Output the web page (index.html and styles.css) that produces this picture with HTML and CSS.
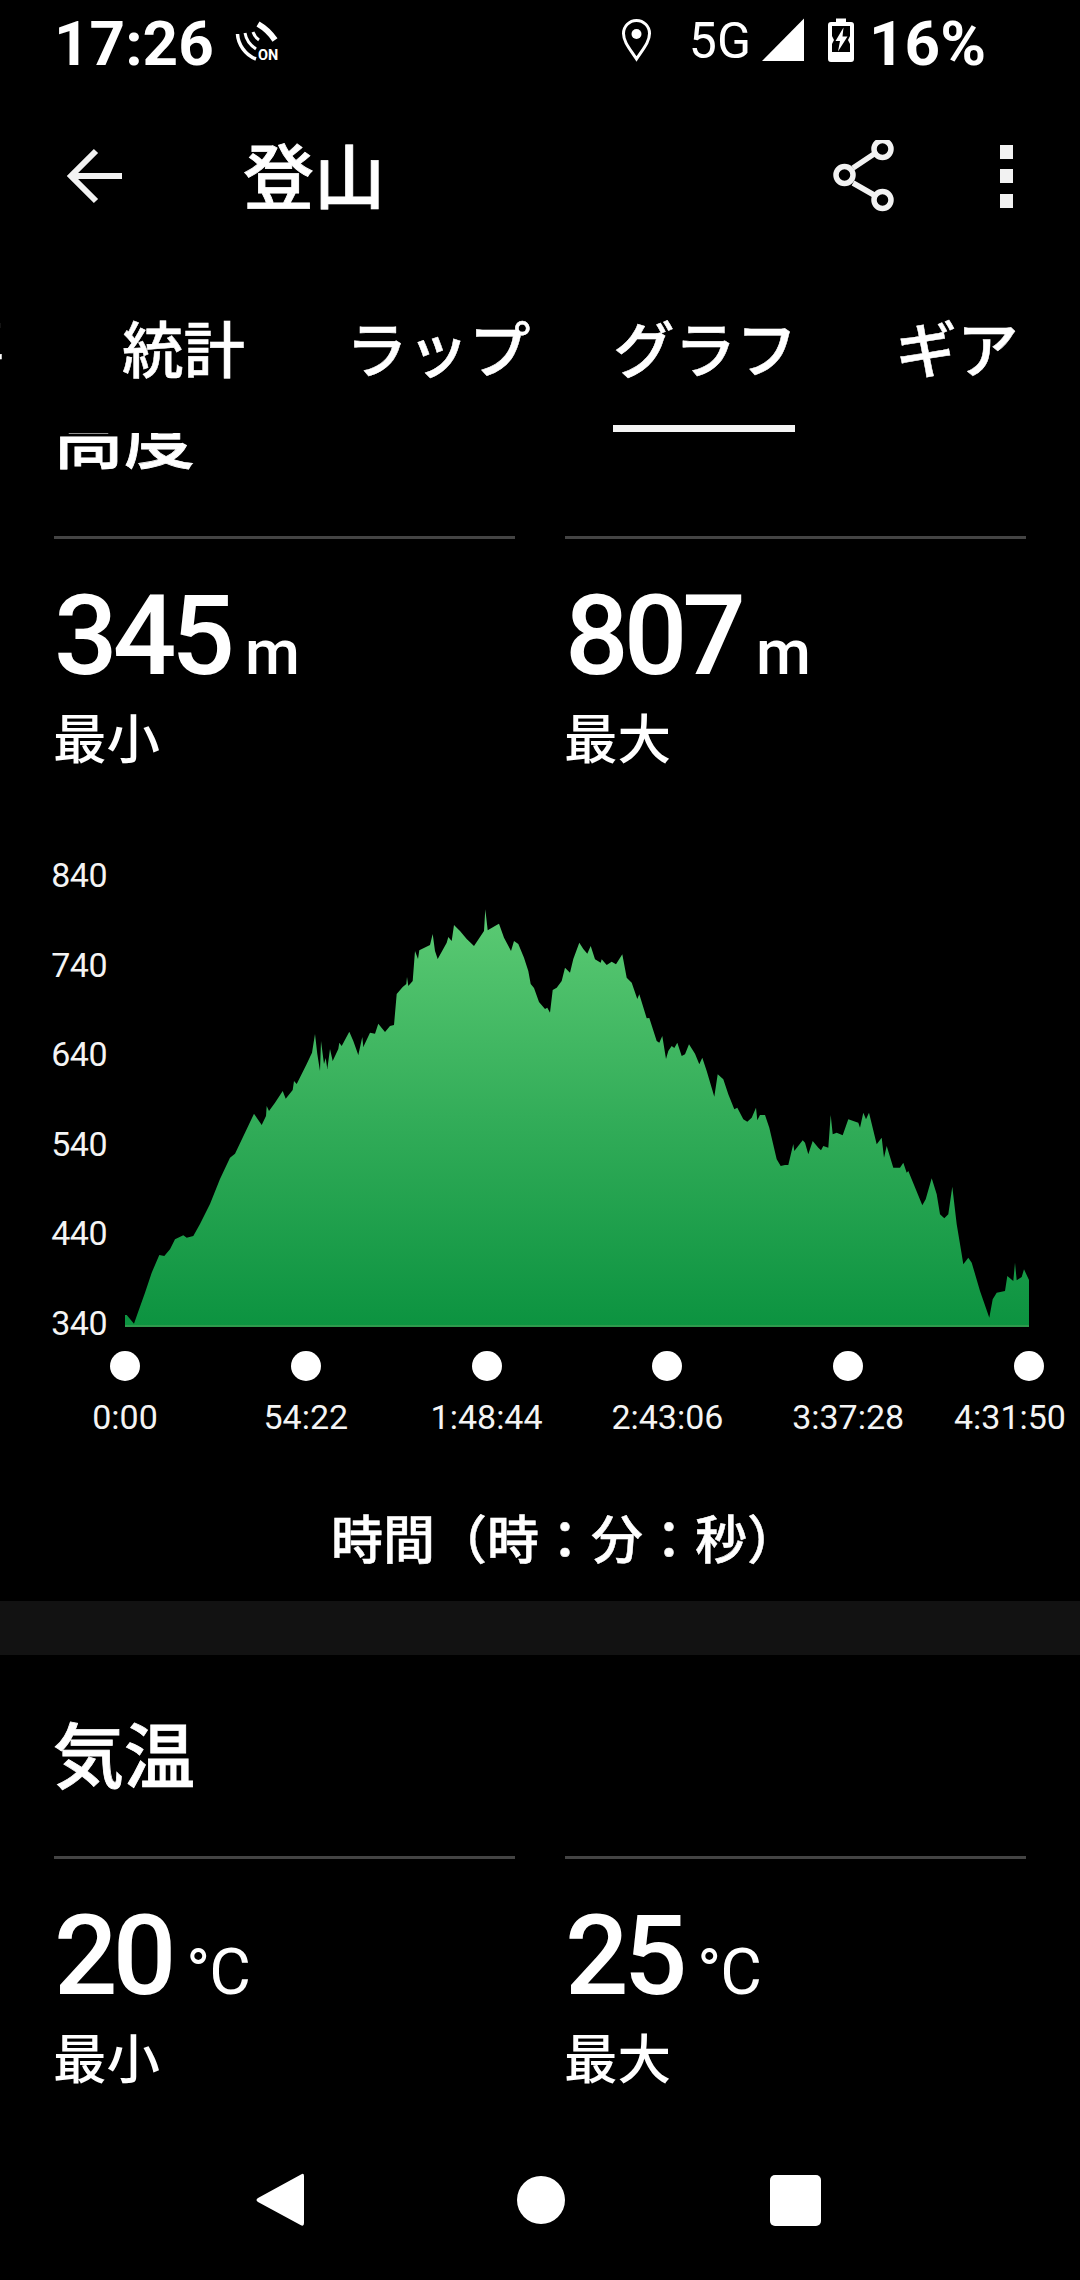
FILE: index.html
```html
<!DOCTYPE html>
<html lang="ja">
<head>
<meta charset="utf-8">
<title>登山</title>
<link rel="stylesheet" href="styles.css">
</head>
<body>
<div class="screen">
  <header class="top">
    <div class="status">
      <span class="clock">17:26</span>
      <svg class="ic-on" width="44" height="88" viewBox="234 0 44 88">
        <g fill="none" stroke="#fff" stroke-linecap="butt">
          <path d="M236.5 34C237 44 244 55 255 59" stroke-width="3.5"/>
          <path d="M244 33C245 39 249 45 255 49" stroke-width="3"/>
          <path d="M252 32C253 35 255 38 258 40" stroke-width="3"/>
          <path d="M257 24C264 28 270 34 274 40" stroke-width="6"/>
        </g>
        <text x="257" y="60" class="ic-on-text">ON</text>
      </svg>
      <div class="status-right">
        <svg width="30" height="88" viewBox="622 0 30 88">
          <path d="M636.5 59C630 49 623.5 42 623.5 33.5a13 13 0 0 1 26 0C649.500 42 643 49 636.500 59Z" fill="none" stroke="#fff" stroke-width="3"/>
          <circle cx="636.500" cy="34" r="5" fill="#fff"/>
        </svg>
        <span class="net">5G</span>
        <svg class="sig" width="42" height="88" viewBox="764 0 42 88">
          <path d="M806 18.500V61H764Z" fill="#fff"/>
        </svg>
        <svg class="bat" width="26" height="88" viewBox="830 0 26 88">
          <path d="M838 18.500h10v3.500h5a3 3 0 0 1 3 3v34a3 3 0 0 1-3 3h-20a3 3 0 0 1-3-3v-34a3 3 0 0 1 3-3h5Z" fill="#fff"/>
          <path d="M834 26H852V36L850 40L852 44V52H834V44L836 40L834 36Z" fill="#000"/>
          <path d="M845.500 27.500L837.500 41H842L840 51.500L849.500 36.500H844.500Z" fill="#fff"/>
        </svg>
        <span class="clock pct">16%</span>
      </div>
    </div>
    <div class="appbar">
      <svg class="ic-back" width="60" height="60" viewBox="66 146 60 60">
        <path d="M122 176H73M96 151L71 176L96 201" fill="none" stroke="#f2f2f2" stroke-width="6"/>
      </svg>
      <h1 class="title">登山</h1>
      <svg class="ic-share" width="68" height="72" viewBox="830 140 68 72">
        <g fill="none" stroke="#f2f2f2" stroke-width="5.500">
          <path d="M853 168L874 154M853 183L874 195"/>
          <circle cx="844.500" cy="175" r="8.500"/>
          <circle cx="882.500" cy="149" r="8.500"/>
          <circle cx="882.500" cy="200" r="8.500"/>
        </g>
      </svg>
      <div class="kebab"><i></i><i></i><i></i></div>
    </div>
    <nav class="tabs">
      <span class="tab tab-first">概要</span>
      <span class="tab">統計</span>
      <span class="tab">ラップ</span>
      <span class="tab tab-active">グラフ</span>
      <span class="tab tab-last">ギア</span>
    </nav>
  </header>

  <main class="scroll">
    <section class="section section-first">
      <h2 class="heading">高度</h2>
      <div class="stats">
        <div class="stat">
          <div class="value">345<span class="unit unit-m">m</span></div>
          <div class="label">最小</div>
        </div>
        <div class="stat">
          <div class="value">807<span class="unit unit-m">m</span></div>
          <div class="label">最大</div>
        </div>
      </div>
      <div class="chart">
        <div class="axis">
          <span>840</span><span>740</span><span>640</span><span>540</span><span>440</span><span>340</span>
        </div>
        <svg class="plot" width="906" height="497" viewBox="125 830 906 497">
          <defs>
            <linearGradient id="fill" gradientUnits="userSpaceOnUse" x1="0" y1="905" x2="0" y2="1325">
              <stop offset="0" stop-color="#5ccb74"/>
              <stop offset="0.5" stop-color="#33ad59"/>
              <stop offset="1" stop-color="#0c9340"/>
            </linearGradient>
          </defs>
          <path fill="url(#fill)" d="M125 1326V1314L126.700 1314L134 1322.700L136.700 1315L145 1291.700L151.700 1271.700L159.300 1254L164.300 1255L170 1248.300L175 1238.300L183.300 1234.300L186.700 1236.700L193.300 1235L200 1223L210 1203L220 1178L230 1156.700L235 1152.700L245 1131.700L254 1112.700L261.700 1124L266 1115L266.700 1105L269 1110L275 1101.700L282.700 1090L285.700 1097.700L292.700 1089L294 1080L296.700 1083L306.700 1063L312 1051.700L315 1033L317.300 1053L320 1070L321 1040L324 1063L325.700 1057L327.300 1068L330 1048L332.700 1060L338.300 1048L339.300 1041.700L341.700 1045L349.300 1030.700L353.300 1040L358.300 1054L362.300 1036L363.300 1046L370 1031.700L375 1032.700L378.300 1022.700L385 1031L390 1025L394 1024L396.700 993L402.700 986L406.300 983L407 976L408.300 985L412.700 980L415 950L418 958L419.300 949.300L430 944L432.700 933L435 950L437.700 958L446.700 941.700L448.300 936L451.700 940L454 924L460 930L466.700 938L474 945L480 936L484 930L485.300 908.300L487.700 929.300L496.700 924L499 922.700L504 936.700L511 950L514 940L518.300 943L524 956.700L528.300 970L530.700 983L534 987L539 1001L545 1008L547.300 1006.700L550 1011.700L552.700 989L556.700 986.700L561.700 980L565 966.700L570 971.700L573.300 958L579.300 941.700L583.300 948L587.300 952.700L590.700 945L595 958.300L600.700 961.700L601.700 958.300L606.700 964L611.700 960.700L616 963.300L622.300 953.300L626.700 976.700L631.700 981.700L637.300 998L639.300 993.300L646.700 1017.300L649.300 1017L656.700 1040L659.300 1041.700L662.300 1035L666 1058L668.300 1050L671.700 1045L674.300 1047L677.300 1041.700L681.700 1055L685 1053.300L689 1043.300L695 1052.700L699.300 1063.300L702.300 1056.700L706.700 1070L714.300 1095.700L717.700 1073.300L723.300 1078.300L728.300 1093.300L734.300 1108.300L737.300 1106.700L743.300 1118.300L747.300 1120.700L751.700 1116.700L756 1106.700L757.300 1119.300L760 1114L765 1114L769.300 1126.700L776.700 1158.300L780.700 1165L785 1164L788.300 1164L793.300 1143L794.300 1150L802.700 1139.300L805 1141.700L808.300 1153.300L812.700 1140L818.300 1146.700L821 1149.300L823.300 1145L828.300 1146.700L830.700 1114L832.700 1133.300L836.700 1131.700L842.700 1134.300L848.300 1118.300L858.300 1121.700L860 1126.700L863.300 1111.700L866 1118.300L869 1111.700L876.700 1143.300L881.700 1136.700L884 1156.700L886.700 1145L893.300 1166.700L900 1166.700L903.300 1161.700L906.700 1171.700L908.300 1170L922.300 1204.300L925.700 1198.300L931.700 1177.300L936.700 1193.300L940 1213.300L944.300 1217.300L948.300 1213.300L952.300 1185.700L956.700 1223.300L961.700 1253.300L963.300 1263.300L968.300 1256.700L971.700 1261.700L980 1290L989.300 1316.700L992.700 1298.300L996.700 1291.700L1005 1290L1007.300 1275L1013.300 1280L1015 1261.700L1016.700 1279.300L1021.700 1276L1024 1268.300L1029 1279V1326Z"/>
          <rect x="125" y="1324" width="904" height="2" fill="#2f9a4d"/>
        </svg>
      </div>
      <div class="ticks">
        <div class="tick"><i></i><span>0:00</span></div>
        <div class="tick"><i></i><span>54:22</span></div>
        <div class="tick"><i></i><span>1:48:44</span></div>
        <div class="tick"><i></i><span>2:43:06</span></div>
        <div class="tick"><i></i><span>3:37:28</span></div>
        <div class="tick tick-last"><i></i><span>4:31:50</span></div>
      </div>
      <div class="xtitle">時間（時：分：秒）</div>
    </section>
    <div class="band"></div>
    <section class="section">
      <h2 class="heading">気温</h2>
      <div class="stats">
        <div class="stat">
          <div class="value">20<span class="unit">°C</span></div>
          <div class="label">最小</div>
        </div>
        <div class="stat">
          <div class="value">25<span class="unit">°C</span></div>
          <div class="label">最大</div>
        </div>
      </div>
    </section>
  </main>

  <footer class="navbar">
    <svg width="48" height="56" viewBox="256 2172 48 56"><path d="M301 2174.500Q304 2172.500 304 2176V2223Q304 2227 300.500 2225L258 2202Q255 2200 258 2198Z" fill="#fff"/></svg>
    <svg width="48" height="48" viewBox="517 2176 48 48"><circle cx="541" cy="2200" r="24" fill="#fff"/></svg>
    <div class="nav-square"></div>
  </footer>
</div>
</body>
</html>
```
FILE: styles.css
```css
* { box-sizing: border-box; }
html, body { margin: 0; padding: 0; background: #000; }
body { width: 1080px; height: 2280px; overflow: hidden; }
.screen {
  width: 1080px; height: 2280px; display: flex; flex-direction: column;
  background: #000; color: #fff; overflow: hidden;
  font-family: Roboto, "Noto Sans CJK JP", sans-serif;
}
svg { display: block; flex: none; }

.top { flex: none; height: 433px; position: relative; z-index: 2; background: #000; overflow: hidden; }
.status { height: 88px; display: flex; align-items: center; padding-left: 54px; }
.clock { font-size: 62px; font-weight: 700; line-height: 88px; }
.ic-on { margin-left: 21px; }
.ic-on-text { font: 700 14.5px Roboto, sans-serif; fill: #fff; }
.status-right { margin-left: auto; margin-right: 94px; display: flex; align-items: center; }
.net { font-size: 50px; line-height: 82px; align-self: flex-start; margin-left: 37px; }
.sig { margin-left: 11px; }
.bat { margin-left: 24px; }
.pct { margin-left: 15px; }

.appbar { height: 176px; display: flex; align-items: center; padding: 0 64px 0 66px; }
.title { margin: 0 0 8px 117px; font-size: 71px; line-height: 68px; font-weight: 500; -webkit-text-stroke: 0.8px #fff; font-family: "Noto Sans CJK JP", sans-serif; }
.ic-share { margin-left: auto; }
.kebab { margin-left: 98px; width: 20px; display: flex; flex-direction: column; align-items: center; gap: 10.500px; }
.kebab i { display: block; width: 13px; height: 14px; background: #f2f2f2; }

.tabs { display: flex; gap: 101px; margin-left: -119px; padding-top: 52px; font-family: "Noto Sans CJK JP", sans-serif; }
.tab { flex: none; font-size: 61.500px; line-height: 61px; font-weight: 500; -webkit-text-stroke: 0.5px #fff; padding-bottom: 48px; border-bottom: 7px solid transparent; white-space: nowrap; }
.tab-first { margin-right: 17px; }
.tab-active { border-bottom-color: #f4f4f4; margin-left: -18.500px; width: 182px; margin-right: 2.500px; }
.tab-last { margin-left: -3px; }

.scroll { flex: 1; min-height: 0; overflow: hidden; }
.section { padding-top: 62px; }
.section-first { margin-top: -98px; }
.heading { margin: 0; padding-left: 53px; font-size: 71px; line-height: 68px; font-weight: 500; -webkit-text-stroke: 0.8px #fff; font-family: "Noto Sans CJK JP", sans-serif; }
.stats { display: grid; grid-template-columns: 461px 461px; gap: 50px; padding: 0 54px; margin-top: 71px; }
.stat { border-top: 3px solid #444; padding-top: 41px; }
.value { font-size: 112px; line-height: 112px; font-weight: 500; letter-spacing: -5px; white-space: nowrap; }
.unit { font-size: 64px; font-weight: 400; letter-spacing: -1px; margin-left: 15px; }
.unit-m { font-weight: 500; font-size: 63px; }
.label { font-size: 53.500px; line-height: 54px; margin: 0 0 0 -1px; font-weight: 500; font-family: "Noto Sans CJK JP", sans-serif; }

.chart { display: flex; align-items: flex-start; height: 497px; margin-top: 68px; padding-left: 40px; }
.axis { width: 67px; display: flex; flex-direction: column; text-align: right; font-size: 34px; letter-spacing: -0.500px; color: #f4f4f4; }
.axis span { height: 89.500px; line-height: 89.500px; }
.plot { margin-left: 18px; }

.ticks { display: grid; grid-template-columns: repeat(6, 180.800px); margin-left: 34.600px; margin-top: 23px; }
.tick { display: flex; flex-direction: column; align-items: center; font-size: 34px; color: #f4f4f4; }
.tick i { display: block; width: 30px; height: 30px; border-radius: 50%; background: #fff; margin-bottom: 16px; }
.tick span { line-height: 40px; white-space: nowrap; }
.tick-last span { margin-right: 38px; }

.xtitle { padding: 0 0 0 50px; text-align: center; font-size: 52px; line-height: 60px; margin-top: 70px; font-family: "Noto Sans CJK JP", sans-serif; font-weight: 500; -webkit-text-stroke: 0.5px #fff; }
.band { height: 54px; background: #121212; margin-top: 34px; }

.navbar { flex: none; height: 160px; display: flex; align-items: center; gap: 213px; padding-left: 256px; position: relative; background: transparent; }
.nav-square { width: 51px; height: 51px; border-radius: 5px; background: #fff; margin-left: -8px; }
```
